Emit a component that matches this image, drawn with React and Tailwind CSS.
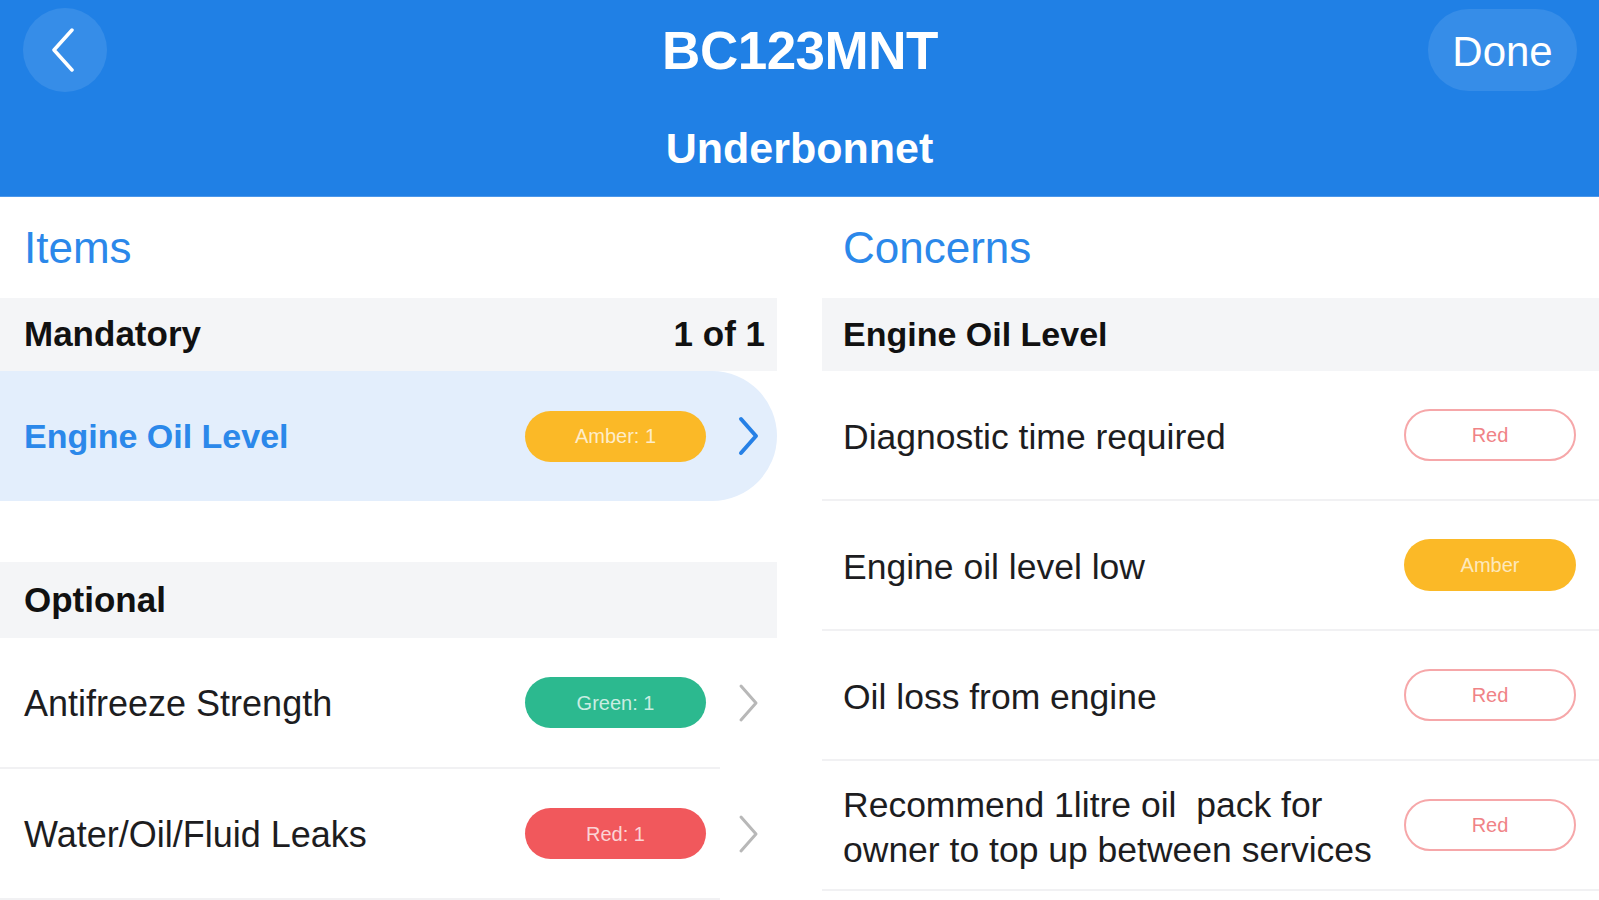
import React from "react";

const Chevron = ({ color = "#b8b8b8", width = 3 }) => (
  <svg width="24" height="40" viewBox="0 0 24 40" fill="none">
    <polyline points="5,3 20,20 5,37" stroke={color} strokeWidth={width} strokeLinecap="round" strokeLinejoin="round" />
  </svg>
);

function ItemBadge({ label, tone }) {
  const tones = {
    amber: "bg-[#fbb927]",
    green: "bg-[#2cb98f]",
    red: "bg-[#f1585c]",
  };
  return (
    <div className={`w-[181px] h-[51px] rounded-full flex items-center justify-center text-[20px] text-white/75 ${tones[tone]}`}>
      {label}
    </div>
  );
}

function ConcernBadge({ tone }) {
  if (tone === "amber") {
    return (
      <div className="w-[172px] h-[52px] rounded-full bg-[#fbb927] flex items-center justify-center text-[20px] text-white/70">
        Amber
      </div>
    );
  }
  return (
    <div className="w-[172px] h-[52px] rounded-full border-2 border-[#f6a7a9] flex items-center justify-center text-[20px] text-[#f08386]">
      Red
    </div>
  );
}

export default function App() {
  const concerns = [
    { text: "Diagnostic time required", tone: "red" },
    { text: "Engine oil level low", tone: "amber" },
    { text: "Oil loss from engine", tone: "red" },
  ];

  return (
    <div className="w-[1599px] h-[900px] overflow-hidden bg-white font-['Liberation_Sans',Arial,sans-serif] text-[#1d1d1f]">
      {/* Header */}
      <header className="h-[197px] bg-[#2080e5] flex flex-col border-b border-[#4b97ea]">
        <div className="grid grid-cols-[1fr_auto_1fr] items-center h-[92px] pt-[8px] pl-[23px] pr-[22px]">
          <div>
            <button className="w-[84px] h-[84px] rounded-full bg-white/10 flex items-center justify-center">
              <svg width="24" height="44" viewBox="0 0 24 44" fill="none" className="-ml-[4px]">
                <polyline points="21,2 3,22 21,42" stroke="white" strokeWidth="3.5" strokeLinecap="round" strokeLinejoin="round" />
              </svg>
            </button>
          </div>
          <h1 className="text-[53px] font-bold text-white tracking-[-0.5px] leading-none">BC123MNT</h1>
          <div className="flex justify-end">
            <button className="w-[149px] h-[82px] rounded-full bg-white/10 text-[42px] text-white pt-[3px]">Done</button>
          </div>
        </div>
        <div className="flex-1 flex items-center justify-center pt-[8px] text-[43px] font-bold text-white">
          Underbonnet
        </div>
      </header>

      <div className="flex">
        {/* Items column */}
        <div className="w-[777px]">
          <div className="h-[101px] flex items-center pl-[24px] text-[44px] text-[#2b88ea]">Items</div>

          <div className="h-[73px] bg-[#f4f5f7] flex items-center justify-between pl-[24px] pr-[12px] text-[35px] font-bold text-[#111]">
            <span>Mandatory</span>
            <span>1 of 1</span>
          </div>

          <div className="h-[130px] bg-[#e3eefc] rounded-r-full flex items-center pl-[24px] pr-[17px]">
            <span className="flex-1 text-[34px] font-bold text-[#2b88ea]">Engine Oil Level</span>
            <ItemBadge label="Amber: 1" tone="amber" />
            <div className="ml-[30px]">
              <Chevron color="#2680e6" width={4} />
            </div>
          </div>

          <div className="h-[61px]" />

          <div className="h-[76px] bg-[#f4f5f7] flex items-center pl-[24px] text-[35px] font-bold text-[#111]">
            Optional
          </div>

          {[
            { name: "Antifreeze Strength", label: "Green: 1", tone: "green" },
            { name: "Water/Oil/Fluid Leaks", label: "Red: 1", tone: "red" },
          ].map((row) => (
            <div key={row.name}>
              <div className="h-[129px] flex items-center pl-[24px] pr-[17px]">
                <span className="flex-1 text-[36px] pt-[2px]">{row.name}</span>
                <ItemBadge label={row.label} tone={row.tone} />
                <div className="ml-[30px]">
                  <Chevron />
                </div>
              </div>
              <div className="w-[720px] h-[2px] bg-[#f1f1f3]" />
            </div>
          ))}
        </div>

        <div className="w-[45px]" />

        {/* Concerns column */}
        <div className="flex-1">
          <div className="h-[101px] flex items-center pl-[21px] text-[44px] text-[#2b88ea]">Concerns</div>

          <div className="h-[73px] bg-[#f4f5f7] flex items-center pl-[21px] text-[34px] font-bold text-[#111]">
            Engine Oil Level
          </div>

          {concerns.map((c) => (
            <div key={c.text} className="h-[130px] flex items-center pl-[21px] pr-[23px] border-b-2 border-[#f1f1f3]">
              <span className="flex-1 text-[35.5px] pt-[5px]">{c.text}</span>
              <ConcernBadge tone={c.tone} />
            </div>
          ))}

          <div className="h-[130px] flex items-center pl-[21px] pr-[23px] border-b-2 border-[#f1f1f3]">
            <span className="flex-1 text-[35.5px] leading-[45px] pt-[5px]">
              Recommend 1litre oil&nbsp; pack for
              <br />
              owner to top up between services
            </span>
            <ConcernBadge tone="red" />
          </div>
        </div>
      </div>
    </div>
  );
}
